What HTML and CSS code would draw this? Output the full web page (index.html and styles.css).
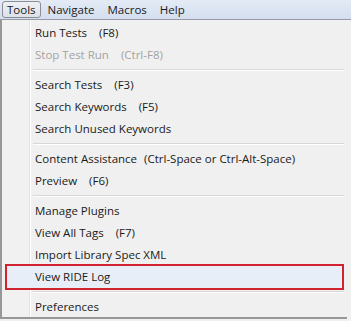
FILE: index.html
```html
<!DOCTYPE html>
<html lang="en">
<head>
  <meta charset="UTF-8">
  <title>RIDE Tools Menu</title>
  <link rel="stylesheet" href="styles.css">
</head>
<body>
  <div class="menubar">
    <span class="menu-title active">Tools</span>
    <span class="menu-title">Navigate</span>
    <span class="menu-title">Macros</span>
    <span class="menu-title">Help</span>
  </div>

  <div class="dropdown">
    <div class="item">Run Tests<span class="key">(F8)</span></div>
    <div class="item disabled">Stop Test Run<span class="key">(Ctrl-F8)</span></div>
    <div class="separator"></div>
    <div class="item">Search Tests<span class="key">(F3)</span></div>
    <div class="item">Search Keywords<span class="key">(F5)</span></div>
    <div class="item">Search Unused Keywords</div>
    <div class="separator"></div>
    <div class="item">Content Assistance<span class="key short">(Ctrl-Space or Ctrl-Alt-Space)</span></div>
    <div class="item">Preview<span class="key">(F6)</span></div>
    <div class="separator"></div>
    <div class="item">Manage Plugins</div>
    <div class="item">View All Tags<span class="key">(F7)</span></div>
    <div class="item">Import Library Spec XML</div>
    <div class="item selected">View RIDE Log</div>
    <div class="separator"></div>
    <div class="item">Preferences</div>
  </div>
</body>
</html>
```

FILE: styles.css
```css
body {
  margin: 0;
  padding: 0;
  width: 351px;
  height: 321px;
  overflow: hidden;
  background-color: #f0f0f0;
  font-family: 'Open Sans', 'Noto Sans', sans-serif;
  font-size: 11.5px;
  color: #1a1a1a;
}
.menubar {
  height: 19px;
  display: flex;
  align-items: center;
  gap: 1px;
  padding-left: 2px;
  background: linear-gradient(#e4ebf6, #d3deee);
  border-bottom: 1px solid #9a9aa6;
}
.menu-title {
  padding: 0 5px;
  line-height: 15px;
  border: 1px solid transparent;
}
.menu-title.active {
  border-color: #8a8e94;
  border-radius: 3px;
  background: linear-gradient(#eef0f4, #dde1e8);
  padding: 0 4px;
}
.dropdown {
  width: 347px;
  height: 299px;
  padding-top: 2px;
  border-left: 2px solid #979797;
  border-bottom: 2px solid #979797;
  background: linear-gradient(to right, #f1f1f1 27px, #e2e3e3 27px, #e2e3e3 28px, #ffffff 28px, #ffffff 29px, #f0f0f0 29px);
  box-sizing: border-box;
}
.item {
  height: 22px;
  line-height: 22px;
  padding-left: 33px;
  margin-right: 3px;
  white-space: nowrap;
}
.item.disabled {
  color: #a3a3a3;
}
.key {
  margin-left: 12px;
}
.key.short {
  margin-left: 7px;
}
.item.selected {
  position: relative;
  background: linear-gradient(to right, transparent 4px, #e8eef8 4px);
}
/* red annotation frame drawn over the hovered entry */
.item.selected::after {
  content: "";
  position: absolute;
  top: -2px;
  bottom: -2px;
  left: 3px;
  right: 0;
  border: 2px solid #d1232f;
}
.separator {
  height: 8px;
  margin-left: 31px;
  margin-right: 3px;
  background: linear-gradient(transparent 3px, #d7d7d7 3px, #d7d7d7 4px, #ffffff 4px, #ffffff 5px, transparent 5px);
}
```
